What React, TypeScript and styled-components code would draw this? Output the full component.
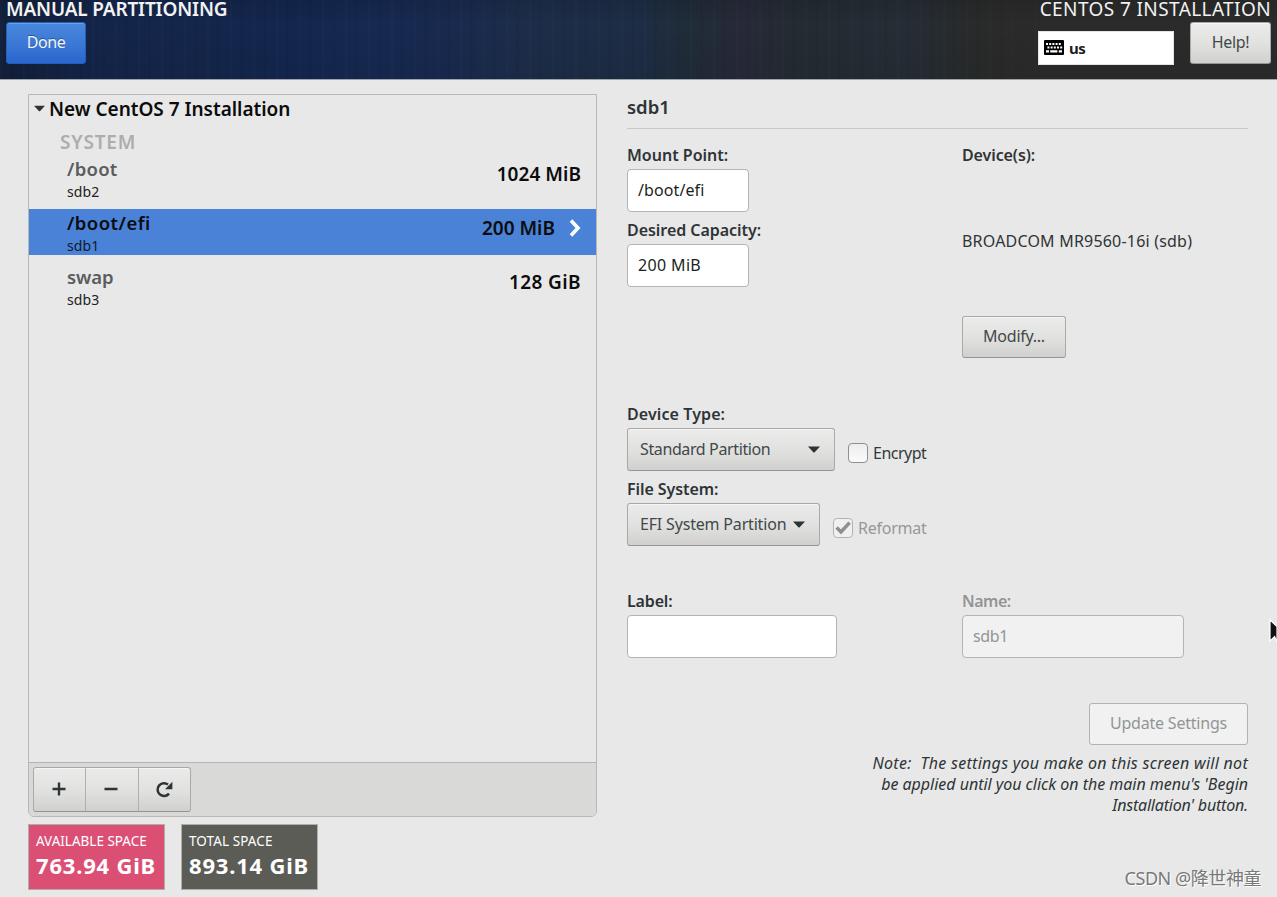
import React from "react";
import styled, { createGlobalStyle, css } from "styled-components";

const GlobalStyle = createGlobalStyle`
  * { box-sizing: border-box; }
  html, body { margin: 0; padding: 0; overflow: hidden; }
  body {
    background: #e8e8e8;
    color: #2e3436;
    font-family: "Noto Sans", "Noto Sans CJK SC", sans-serif;
    font-size: 16px;
  }
`;

const Screen = styled.div`
  position: relative;
  width: 1277px;
  height: 897px;
  overflow: hidden;
  background: #e8e8e8;
`;

const Text = styled.span<{ $size?: number; $weight?: number; $track?: number; $line?: number; $color?: string }>`
  display: block;
  white-space: pre;
  font-size: ${(p) => p.$size ?? 16}px;
  font-weight: ${(p) => p.$weight ?? 400};
  letter-spacing: ${(p) => p.$track ?? 0}px;
  line-height: ${(p) => p.$line ?? 20}px;
  color: ${(p) => p.$color ?? "inherit"};
`;

/* ---- header ---- */

const Header = styled.header`
  display: flex;
  justify-content: space-between;
  height: 80px;
  padding: 0 6px;
  border-bottom: 1px solid #9da3a8;
  background:
    linear-gradient(180deg, rgba(0, 0, 0, 0.1), rgba(0, 0, 0, 0) 30%, rgba(0, 0, 0, 0.06)),
    linear-gradient(90deg, transparent 980px, #2b2b2b 1060px),
    repeating-linear-gradient(90deg, rgba(70, 110, 170, 0.035) 0 2px, transparent 3px 9px, rgba(0, 0, 20, 0.05) 11px 12px, transparent 14px 23px),
    linear-gradient(90deg, #13203a 0, #13254a 100px, #14264b 200px, #13264e 290px, #162951 370px, #18294f 440px,
      #1d2d49 530px, #1d2d44 640px, #202c38 690px, #272938 745px, #232c31 800px, #252d35 900px, #292a29 990px, #2b2b2b 1060px, #2b2b2b 100%);
  color: #f2f2f2;
`;

const HeaderSide = styled.div<{ $end?: boolean }>`
  display: flex;
  flex-direction: column;
  align-items: ${(p) => (p.$end ? "flex-end" : "flex-start")};
  gap: 4px;
`;

const HeaderTools = styled.div`
  display: flex;
  gap: 16px;
`;

const Keyboard = styled.div`
  display: flex;
  align-items: center;
  gap: 5px;
  width: 136px;
  height: 34px;
  margin-top: 9px;
  padding: 0 0 1px 5px;
  border: 1px solid #e4e4e4;
  background: #fff;
  color: #1d1d1d;
`;

/* ---- controls ---- */

const raised = css`
  border: 1px solid #a9a9a6;
  border-bottom-color: #949490;
  background: linear-gradient(180deg, #ebebeb, #e0e0df 55%, #d0d0ce);
  box-shadow: inset 0 1px 0 #f6f6f6;
  color: #41484a;
`;

const Button = styled.button<{ $width: number; $kind?: "primary" | "disabled" }>`
  display: flex;
  align-items: center;
  justify-content: center;
  width: ${(p) => p.$width}px;
  height: 42px;
  padding: 0 0 2px;
  border-radius: 3px;
  font: inherit;
  ${raised}
  ${(p) =>
    p.$kind === "primary" &&
    css`
      border-color: #2260bd;
      background: linear-gradient(180deg, #4a87dc, #3c79d6 50%, #2a66cc);
      box-shadow: inset 0 1px 0 #6d9fe4;
      color: #f4f6fa;
      text-shadow: 0 -1px 0 rgba(0, 0, 0, 0.35);
    `}
  ${(p) =>
    p.$kind === "disabled" &&
    css`
      border-color: #b2b2b0;
      background: #f1f1f1;
      box-shadow: none;
      color: #939594;
    `}
`;

const Combo = styled.button<{ $width: number }>`
  display: flex;
  align-items: center;
  justify-content: space-between;
  width: ${(p) => p.$width}px;
  height: 43px;
  padding: 0 14px 2px 12px;
  border-radius: 3px;
  font: inherit;
  ${raised}
`;

const ComboArrow = styled.span`
  display: flex;
  padding-top: 2px;
`;

const Entry = styled.div<{ $width: number; $disabled?: boolean }>`
  display: flex;
  align-items: center;
  width: ${(p) => p.$width}px;
  height: 43px;
  padding: 0 10px 2px;
  border: 1px solid ${(p) => (p.$disabled ? "#b4b4b2" : "#b3b3b1")};
  border-radius: 4px;
  background: ${(p) => (p.$disabled ? "#f1f1f1" : "#fff")};
  color: ${(p) => (p.$disabled ? "#939594" : "#1c1f20")};
`;

const Check = styled.label<{ $disabled?: boolean }>`
  display: flex;
  align-items: center;
  gap: 5px;
  margin: 7px 0 0 13px;
  color: ${(p) => (p.$disabled ? "#969897" : "#33393b")};
`;

const Box = styled.span<{ $disabled?: boolean }>`
  display: flex;
  align-items: center;
  justify-content: center;
  width: 20px;
  height: 20px;
  border: 1px solid ${(p) => (p.$disabled ? "#b3b3b1" : "#8f8f8c")};
  border-radius: 4px;
  background: ${(p) => (p.$disabled ? "#f0f0f0" : "linear-gradient(180deg, #ededed, #fbfbfb)")};
`;

/* ---- body ---- */

const Body = styled.main`
  display: flex;
  gap: 30px;
  padding: 14px 29px 0 28px;
`;

const Left = styled.section`
  width: 569px;
`;

const Tree = styled.div`
  display: flex;
  flex-direction: column;
  height: 723px;
  border: 1px solid #b8b8b6;
  border-radius: 0 0 6px 6px;
  overflow: hidden;
`;

const TreeTitle = styled.div`
  display: flex;
  align-items: center;
  gap: 4px;
  height: 27px;
  padding-left: 5px;
  color: #0c0c0c;
`;

const Group = styled.div`
  height: 33px;
  padding: 12px 0 0 31px;
`;

const Mount = styled.div<{ $selected?: boolean }>`
  display: flex;
  flex-shrink: 0;
  height: 46px;
  margin-bottom: 8px;
  padding: 0 15px 0 38px;
  background: ${(p) => (p.$selected ? "#4a82d8" : "transparent")};
  color: ${(p) => (p.$selected ? "#0a0d12" : "#5b5d5d")};
`;

const MountNames = styled.div`
  flex: 1;
`;

const MountSize = styled.div`
  display: flex;
  align-items: center;
  gap: 14px;
  height: 37px;
  color: #0c0c0c;
`;

const Toolbar = styled.div`
  display: flex;
  height: 54px;
  margin-top: auto;
  padding: 4px;
  border-top: 1px solid #b3b3b1;
  background: #d9d9d7;
`;

const ToolGroup = styled.div`
  display: flex;
  width: 158px;
  height: 45px;
  border-radius: 3px;
  overflow: hidden;
  ${raised}
`;

const Tool = styled.button`
  display: flex;
  align-items: center;
  justify-content: center;
  flex: 1;
  padding: 0 1px 1px 0;
  border: 0;
  background: none;
  color: #2e3436;
  & + & { border-left: 1px solid #b0b0ae; }
`;

const Spaces = styled.div`
  display: flex;
  gap: 16px;
  margin-top: 7px;
`;

const Space = styled.div<{ $fill: string }>`
  width: 137px;
  height: 66px;
  padding: 8px 0 0 7px;
  border: 1px solid #b0aeac;
  background: ${(p) => p.$fill};
  color: #fff;
`;

const Right = styled.section`
  display: flex;
  flex-direction: column;
  width: 621px;
`;

const Heading = styled.div`
  height: 35px;
  padding-top: 3px;
  border-bottom: 1px solid #c8c8c7;
`;

const Pair = styled.div<{ $top: number; $height: number }>`
  display: grid;
  grid-template-columns: 335px 1fr;
  height: ${(p) => p.$height}px;
  margin-top: ${(p) => p.$top}px;
`;

const Column = styled.div<{ $top?: number }>`
  display: flex;
  flex-direction: column;
  align-items: flex-start;
  gap: 4px;
  margin-top: ${(p) => p.$top ?? 0}px;
`;

const Line = styled.div`
  display: flex;
  align-items: center;
`;

const Device = styled.div`
  margin: 62px 0 65px;
`;

const Note = styled.div`
  display: flex;
  flex-direction: column;
  align-items: flex-end;
  margin-top: 8px;
  font-style: italic;
`;

const Bottom = styled.div`
  display: flex;
  flex-direction: column;
  align-items: flex-end;
  margin-top: 45px;
`;

const Pointer = styled.svg`
  position: absolute;
  left: 1268px;
  top: 618px;
`;

const Watermark = styled.div`
  position: absolute;
  right: 16px;
  bottom: 6px;
  text-shadow: 1px 1px 0 #fff;
`;

const Arrow = ({ w = 12 }: { w?: number }) => (
  <svg width={w} height="7" viewBox="0 0 12 7">
    <path d="M0 .6h12L6.7 6.3q-.7.6-1.4 0z" fill="#2e3436" />
  </svg>
);

const KeyboardIcon = () => (
  <svg width="20" height="15" viewBox="0 0 20 15">
    <rect width="20" height="15" rx="1" fill="#000" />
    <path
      fill="#fff"
      d="M2 3h2v2H2zM5.2 3h2v2h-2zM8.4 3h2v2h-2zM11.6 3h2v2h-2zM14.8 3h2v2h-2zM3.4 6.6h2v2h-2zM6.6 6.6h2v2h-2zM9.8 6.6h2v2h-2zM13 6.6h2v2h-2zM16.2 6.6h2v2h-2zM2 10.2h3v2.2H2zM6.2 10.2h7.2v2.2H6.2zM14.8 10.2h3.2v2.2h-3.2z"
    />
  </svg>
);

type MountItem = { name: string; device: string; size: string; selected?: boolean; nameTrack: number; sizeTrack: number };

const mounts: MountItem[] = [
  { name: "/boot", device: "sdb2", size: "1024 MiB", nameTrack: 0.25, sizeTrack: 0.05 },
  { name: "/boot/efi", device: "sdb1", size: "200 MiB", selected: true, nameTrack: 0.45, sizeTrack: 0 },
  { name: "swap", device: "sdb3", size: "128 GiB", nameTrack: -0.1, sizeTrack: 0.4 },
];

const Label = ({ children, track = 0, color }: { children: string; track?: number; color?: string }) => (
  <Text $weight={600} $track={track} $line={28} $color={color}>{children}</Text>
);

export default function App() {
  return (
    <Screen>
      <GlobalStyle />
      <Header>
        <HeaderSide>
          <Text $size={19} $weight={600} $track={-0.18} $line={18}>MANUAL PARTITIONING</Text>
          <Button $width={80} $kind="primary"><Text $track={-0.4}>Done</Text></Button>
        </HeaderSide>
        <HeaderSide $end>
          <Text $size={19} $track={0.4} $line={18}>CENTOS 7 INSTALLATION</Text>
          <HeaderTools>
            <Keyboard><KeyboardIcon /><Text $size={15} $weight={700} $track={-0.5}>us</Text></Keyboard>
            <Button $width={81}><Text $track={-0.3}>Help!</Text></Button>
          </HeaderTools>
        </HeaderSide>
      </Header>
      <Body>
        <Left>
          <Tree>
            <TreeTitle>
              <Arrow w={11} />
              <Text $size={19} $weight={600} $track={-0.02}>New CentOS 7 Installation</Text>
            </TreeTitle>
            <Group><Text $size={19} $weight={600} $track={0.8} $line={17} $color="#adadad">SYSTEM</Text></Group>
            {mounts.map((m) => (
              <Mount key={m.name} $selected={m.selected}>
                <MountNames>
                  <Text $size={18.5} $weight={600} $track={m.nameTrack} $line={27}>{m.name}</Text>
                  <Text $size={14} $track={0.1} $line={19} $color={m.selected ? "#0f1a2c" : "#222"}>{m.device}</Text>
                </MountNames>
                <MountSize>
                  <Text $size={19} $weight={600} $track={m.sizeTrack}>{m.size}</Text>
                  {m.selected && (
                    <svg width="12" height="18" viewBox="0 0 12 18">
                      <path d="M2 1.5 9 9l-7 7.5" fill="none" stroke="#fff" strokeWidth="3.6" />
                    </svg>
                  )}
                </MountSize>
              </Mount>
            ))}
            <Toolbar>
              <ToolGroup>
                <Tool><svg width="14" height="14"><path d="M7 .5v13M.5 7h13" stroke="currentColor" strokeWidth="2.4" /></svg></Tool>
                <Tool><svg width="14" height="14"><path d="M.5 7h13" stroke="currentColor" strokeWidth="2.4" /></svg></Tool>
                <Tool>
                  <svg width="18" height="17" viewBox="0 0 18 17">
                    <path d="M14 12.6A6.4 6.4 0 1 1 13 3.6" fill="none" stroke="currentColor" strokeWidth="2.5" />
                    <path d="M17.4.8v7.4H10z" fill="currentColor" />
                  </svg>
                </Tool>
              </ToolGroup>
            </Toolbar>
          </Tree>
          <Spaces>
            <Space $fill="#dc4f75">
              <Text $size={13.5} $track={0} $line={17}>AVAILABLE SPACE</Text>
              <Text $size={22} $weight={700} $track={0.8} $line={31}>763.94 GiB</Text>
            </Space>
            <Space $fill="#5c5c57">
              <Text $size={13.5} $track={0.1} $line={17}>TOTAL SPACE</Text>
              <Text $size={22} $weight={700} $track={0.8} $line={31}>893.14 GiB</Text>
            </Space>
          </Spaces>
        </Left>

        <Right>
          <Heading><Text $size={18.5} $weight={600}>sdb1</Text></Heading>
          <Pair $top={12} $height={247}>
            <Column>
              <div>
                <Label>Mount Point:</Label>
                <Entry $width={122}><Text $track={0.1}>/boot/efi</Text></Entry>
              </div>
              <div>
                <Label track={-0.04}>Desired Capacity:</Label>
                <Entry $width={122}><Text $track={0.35}>200 MiB</Text></Entry>
              </div>
            </Column>
            <div>
              <Label track={-0.1}>Device(s):</Label>
              <Device><Text $track={0.2}>BROADCOM MR9560-16i (sdb)</Text></Device>
              <Button $width={104}><Text $track={-0.25}>Modify...</Text></Button>
            </div>
          </Pair>
          <Column $top={12}>
            <div>
              <Label track={0.1}>Device Type:</Label>
              <Line>
                <Combo $width={208}><Text $track={-0.38}>Standard Partition</Text><ComboArrow><Arrow /></ComboArrow></Combo>
                <Check><Box /><Text $track={-0.5}>Encrypt</Text></Check>
              </Line>
            </div>
            <div>
              <Label track={-0.08}>File System:</Label>
              <Line>
                <Combo $width={193}><Text $track={-0.18}>EFI System Partition</Text><ComboArrow><Arrow /></ComboArrow></Combo>
                <Check $disabled>
                  <Box $disabled>
                    <svg width="16" height="14" viewBox="0 0 16 14">
                      <path d="M1.6 6.6 6 11l8.6-9.4" fill="none" stroke="#8f9190" strokeWidth="3.6" />
                    </svg>
                  </Box>
                  <Text $track={-0.25}>Reformat</Text>
                </Check>
              </Line>
            </div>
          </Column>
          <Pair $top={41} $height={71}>
            <div>
              <Label track={-0.15}>Label:</Label>
              <Entry $width={210} />
            </div>
            <div>
              <Label track={-0.5} color="#939594">Name:</Label>
              <Entry $width={222} $disabled><Text $track={-0.4}>sdb1</Text></Entry>
            </div>
          </Pair>
          <Bottom>
            <Button $width={159} $kind="disabled"><Text $track={-0.2}>Update Settings</Text></Button>
            <Note>
              <Text $track={0.28} $line={21}>Note:  The settings you make on this screen will not</Text>
              <Text $track={-0.02} $line={21}>be applied until you click on the main menu's 'Begin</Text>
              <Text $track={-0.2} $line={21}>Installation' button.</Text>
            </Note>
          </Bottom>
        </Right>
      </Body>
      <Pointer width="9" height="26" viewBox="0 0 9 26">
        <path d="M2 2v21l4.6-4.4L9 24V8.6z" fill="#111" stroke="#fff" strokeWidth="1.2" />
      </Pointer>
      <Watermark><Text $size={18} $track={-0.45} $line={26} $color="#77797a">CSDN @降世神童</Text></Watermark>
    </Screen>
  );
}
